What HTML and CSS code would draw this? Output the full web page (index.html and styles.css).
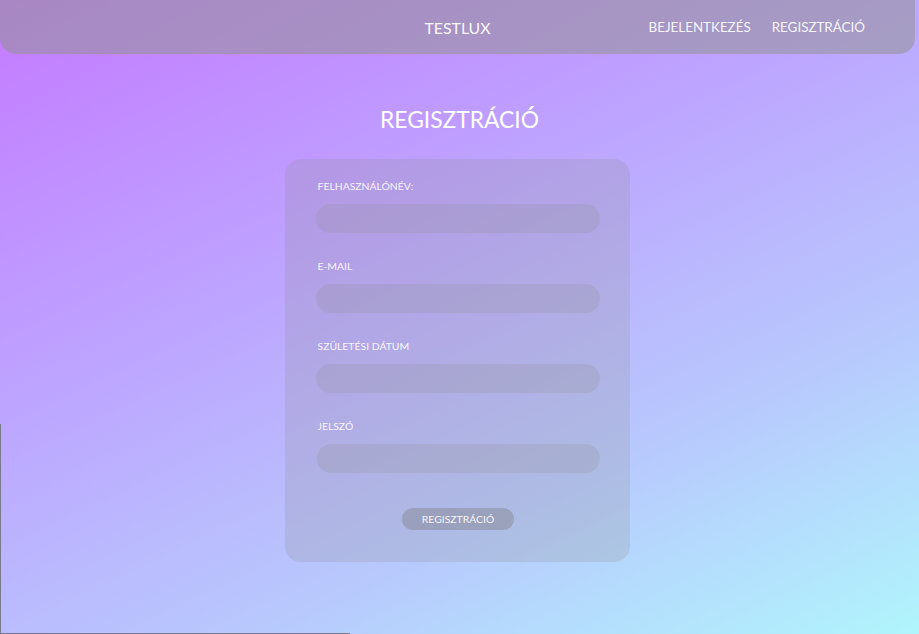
FILE: index.html
```html
<!DOCTYPE html>
<html lang="hu">
<head>
<meta charset="utf-8">
<title>TestLux - Regisztráció</title>
<link rel="stylesheet" href="styles.css">
</head>
<body>
<div class="page">
  <header class="topbar">
    <div class="brand">TESTLUX</div>
    <nav class="nav">
      <a href="#" class="nav-link">BEJELENTKEZÉS</a>
      <a href="#" class="nav-link">REGISZTRÁCIÓ</a>
    </nav>
  </header>
  <main class="main">
    <h1 class="title">REGISZTRÁCIÓ</h1>
    <form class="card">
      <div class="field">
        <label class="label">FELHASZNÁLÓNÉV:</label>
        <input class="input" type="text">
      </div>
      <div class="field">
        <label class="label">E-MAIL</label>
        <input class="input" type="text">
      </div>
      <div class="field">
        <label class="label">SZÜLETÉSI DÁTUM</label>
        <input class="input" type="text">
      </div>
      <div class="field">
        <label class="label">JELSZÓ</label>
        <input class="input input-last" type="password">
      </div>
      <div class="actions">
        <button class="btn" type="button">REGISZTRÁCIÓ</button>
      </div>
    </form>
  </main>
  <div class="edge-frame"></div>
</div>
</body>
</html>
```
FILE: styles.css
```css
* { box-sizing: border-box; }
html, body {
  margin: 0;
  padding: 0;
  height: 100%;
}
body {
  font-family: "Lato", "Noto Sans", sans-serif;
  color: #fff;
  overflow: hidden;
}
.page {
  position: relative;
  width: 100%;
  height: 634px;
  background: linear-gradient(155deg, #c47aff 0%, #bda6ff 40%, #b8c8fd 70%, #b0f5fc 100%);
}
.topbar {
  width: calc(100% - 4px);
  height: 54px;
  background: rgba(146, 146, 146, 0.54);
  border-radius: 0 0 16px 16px;
  display: flex;
  align-items: center;
  justify-content: flex-end;
  position: relative;
  padding-right: 50px;
}
.brand {
  position: absolute;
  left: 0;
  right: 0;
  text-align: center;
  font-size: 15.8px;
  letter-spacing: 0;
  color: rgba(255,255,255,0.95);
  pointer-events: none;
}
.nav {
  display: flex;
  gap: 21px;
  position: relative;
}
.nav-link {
  color: rgba(255,255,255,0.92);
  text-decoration: none;
  font-size: 13.4px;
  letter-spacing: 0;
}
.main {
  display: flex;
  flex-direction: column;
  align-items: center;
}
.title {
  margin: 50px 0 0;
  font-weight: 400;
  font-size: 22.8px;
  line-height: 30px;
  letter-spacing: 0;
}
.card {
  margin-top: 25px;
  margin-left: -5px;
  width: 345px;
  height: 403px;
  background: rgba(140, 140, 140, 0.22);
  border-radius: 16px;
  padding: 20px 30px 0 31px;
  display: flex;
  flex-direction: column;
}
.field {
  display: flex;
  flex-direction: column;
  height: 80px;
}
.label {
  padding-left: 2px;
  font-size: 10.4px;
  line-height: 14px;
  letter-spacing: 0;
  color: rgba(255,255,255,0.92);
}
.input {
  margin-top: 11px;
  width: 284px;
  height: 29px;
  border: none;
  border-radius: 15px;
  background: rgba(140, 140, 140, 0.2);
  outline: none;
}
.input-last { margin-left: 1px; width: 283px; }
.actions {
  display: flex;
  justify-content: center;
  margin-top: 9px;
  padding-left: 1px;
}
.btn {
  width: 112px;
  height: 22px;
  border: none;
  border-radius: 11px;
  background: rgba(130, 130, 140, 0.45);
  color: rgba(255,255,255,0.92);
  font-family: inherit;
  font-size: 10.4px;
  letter-spacing: 0;
  padding: 0;
}
.edge-frame {
  position: absolute;
  left: 0;
  top: 424px;
  width: 350px;
  height: 210px;
  border-left: 1px solid #7a7a8e;
  border-bottom: 1px solid #7a7a8e;
  pointer-events: none;
}
```
